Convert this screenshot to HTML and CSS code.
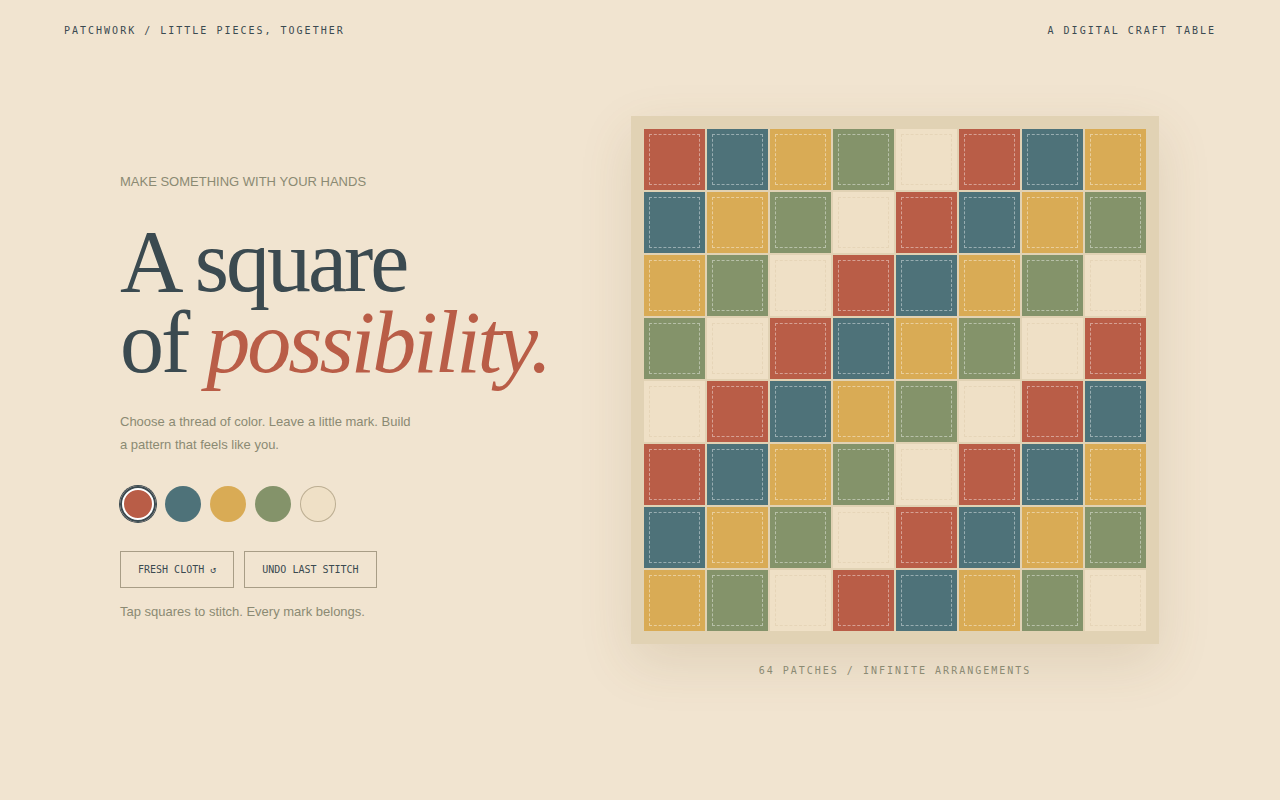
FILE: index.html
```html
<!DOCTYPE html>
<html lang="en">
<head>
<meta charset="utf-8">
<title>Patchwork</title>
<link rel="stylesheet" href="styles.css">
</head>
<body>
<header class="topbar">
  <span class="brand">PATCHWORK / LITTLE PIECES, TOGETHER</span>
  <span class="tagline">A DIGITAL CRAFT TABLE</span>
</header>
<main class="stage">
  <section class="intro">
    <p class="eyebrow">MAKE SOMETHING WITH YOUR HANDS</p>
    <h1 class="headline">A square<br>of <em>possibility.</em></h1>
    <p class="lede">Choose a thread of color. Leave a little mark. Build<br>a pattern that feels like you.</p>
    <div class="swatches">
      <button class="swatch red active" aria-label="Red"></button>
      <button class="swatch blue" aria-label="Blue"></button>
      <button class="swatch yellow" aria-label="Yellow"></button>
      <button class="swatch green" aria-label="Green"></button>
      <button class="swatch cream" aria-label="Cream"></button>
    </div>
    <div class="actions">
      <button class="btn">FRESH CLOTH ↺</button>
      <button class="btn">UNDO LAST STITCH</button>
    </div>
    <p class="hint">Tap squares to stitch. Every mark belongs.</p>
  </section>
  <section class="table">
    <div class="board">
      <div class="tile red"></div><div class="tile blue"></div><div class="tile yellow"></div><div class="tile green"></div><div class="tile cream"></div><div class="tile red"></div><div class="tile blue"></div><div class="tile yellow"></div>
      <div class="tile blue"></div><div class="tile yellow"></div><div class="tile green"></div><div class="tile cream"></div><div class="tile red"></div><div class="tile blue"></div><div class="tile yellow"></div><div class="tile green"></div>
      <div class="tile yellow"></div><div class="tile green"></div><div class="tile cream"></div><div class="tile red"></div><div class="tile blue"></div><div class="tile yellow"></div><div class="tile green"></div><div class="tile cream"></div>
      <div class="tile green"></div><div class="tile cream"></div><div class="tile red"></div><div class="tile blue"></div><div class="tile yellow"></div><div class="tile green"></div><div class="tile cream"></div><div class="tile red"></div>
      <div class="tile cream"></div><div class="tile red"></div><div class="tile blue"></div><div class="tile yellow"></div><div class="tile green"></div><div class="tile cream"></div><div class="tile red"></div><div class="tile blue"></div>
      <div class="tile red"></div><div class="tile blue"></div><div class="tile yellow"></div><div class="tile green"></div><div class="tile cream"></div><div class="tile red"></div><div class="tile blue"></div><div class="tile yellow"></div>
      <div class="tile blue"></div><div class="tile yellow"></div><div class="tile green"></div><div class="tile cream"></div><div class="tile red"></div><div class="tile blue"></div><div class="tile yellow"></div><div class="tile green"></div>
      <div class="tile yellow"></div><div class="tile green"></div><div class="tile cream"></div><div class="tile red"></div><div class="tile blue"></div><div class="tile yellow"></div><div class="tile green"></div><div class="tile cream"></div>
    </div>
    <p class="caption">64 PATCHES / INFINITE ARRANGEMENTS</p>
  </section>
</main>
</body>
</html>
```
FILE: styles.css
```css
* { box-sizing: border-box; }
html, body { margin: 0; padding: 0; }
body {
  background: #f1e4d0;
  color: #3b4a50;
  font-family: "Liberation Sans", Arial, sans-serif;
  min-height: 100vh;
}
.topbar {
  display: flex;
  justify-content: space-between;
  align-items: center;
  padding: 25px 64px 23px 64px;
  font-family: "DejaVu Sans Mono", monospace;
  font-size: 10px;
  line-height: 12px;
  letter-spacing: 2px;
  color: #3b4a50;
}
.stage {
  margin: 0 121px 0 120px;
  padding-top: 56px;
  display: flex;
  justify-content: space-between;
  align-items: center;
}
.intro { width: 460px; }
.eyebrow {
  margin: 0 0 32px;
  font-size: 13px;
  line-height: 15px;
  color: #8b8a73;
}
.headline {
  margin: 0;
  font-family: "Liberation Serif", "Times New Roman", serif;
  font-weight: 400;
  font-size: 88px;
  line-height: 81px;
  letter-spacing: -3px;
  color: #3b4a50;
}
.headline em {
  font-style: italic;
  color: #b95d47;
}
.lede {
  margin: 27px 0 0;
  font-size: 13px;
  line-height: 23px;
  color: #8b8a73;
}
.swatches {
  display: flex;
  gap: 9px;
  margin-top: 30px;
}
.swatch {
  width: 36px;
  height: 36px;
  padding: 0;
  border: 0;
  border-radius: 50%;
  cursor: pointer;
}
.swatch.red { background: #b95d47; }
.swatch.blue { background: #4e7279; }
.swatch.yellow { background: #d9ab55; }
.swatch.green { background: #84936a; }
.swatch.cream { background: #efe0c6; box-shadow: inset 0 0 0 1px #bcae93; }
.swatch.active {
  box-shadow: 0 0 0 1px #3b4a50, inset 0 0 0 2px #3b4a50, inset 0 0 0 4px #ffffff;
}
.actions {
  display: flex;
  gap: 10px;
  margin-top: 29px;
}
.btn {
  height: 37px;
  padding: 0 17px;
  background: transparent;
  border: 1px solid #a89d86;
  font-family: "DejaVu Sans Mono", monospace;
  font-size: 10px;
  color: #3b4a50;
  cursor: pointer;
}
.hint {
  margin: 16px 0 0;
  font-size: 13px;
  line-height: 15px;
  color: #8b8a73;
}
.table {
  display: flex;
  flex-direction: column;
  align-items: center;
}
.board {
  display: grid;
  grid-template-columns: repeat(8, 61px);
  grid-auto-rows: 61px;
  gap: 2px;
  padding: 13px;
  background: #e1d2b4;
  box-shadow: 0 18px 50px rgba(120, 90, 40, 0.14);
}
.tile {
  position: relative;
}
.tile::after {
  content: "";
  position: absolute;
  inset: 5px;
  border: 1px dashed rgba(255, 255, 255, 0.42);
}
.tile.red { background: #b95d47; }
.tile.blue { background: #4e7279; }
.tile.yellow { background: #d9ab55; }
.tile.green { background: #84936a; }
.tile.cream { background: #efe0c6; }
.tile.cream::after { border-color: rgba(215, 195, 160, 0.35); }
.caption {
  margin: 21px 0 0;
  font-family: "DejaVu Sans Mono", monospace;
  font-size: 10px;
  line-height: 12px;
  letter-spacing: 2px;
  color: #8b8a73;
}
```
